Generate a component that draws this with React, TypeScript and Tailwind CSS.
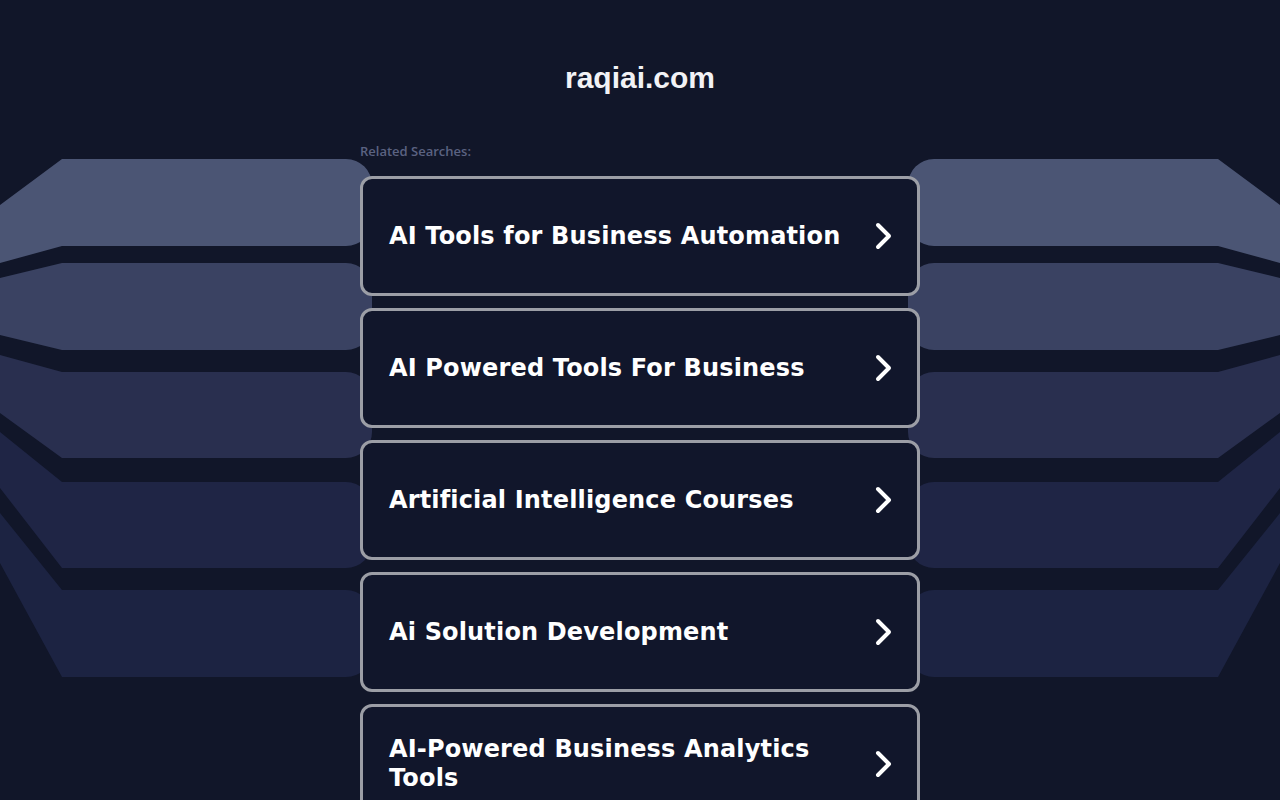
import React from "react";

const bands = [
  { c: "#4b5574", lt: 205, t: 159, b: 246, lb: 263 },
  { c: "#3a4262", lt: 278, t: 263, b: 350, lb: 335 },
  { c: "#292f4f", lt: 355, t: 372, b: 458, lb: 413 },
  { c: "#1f2545", lt: 432, t: 482, b: 568, lb: 488 },
  { c: "#1c2342", lt: 513, t: 590, b: 677, lb: 563 },
];

function bandPath(b: { lt: number; t: number; b: number; lb: number }) {
  const r = 26;
  return `M0 ${b.lt} L62 ${b.t} L${372 - r} ${b.t} A${r} ${r} 0 0 1 372 ${b.t + r} L372 ${b.b - r} A${r} ${r} 0 0 1 ${372 - r} ${b.b} L62 ${b.b} L0 ${b.lb} Z`;
}

function Background() {
  return (
    <svg
      className="absolute left-0 top-0 pointer-events-none"
      width="1280"
      height="800"
      viewBox="0 0 1280 800"
    >
      {bands.map((b, i) => (
        <path key={"l" + i} d={bandPath(b)} fill={b.c} />
      ))}
      <g transform="translate(1280,0) scale(-1,1)">
        {bands.map((b, i) => (
          <path key={"r" + i} d={bandPath(b)} fill={b.c} />
        ))}
      </g>
    </svg>
  );
}

const items = [
  "AI Tools for Business Automation",
  "AI Powered Tools For Business",
  "Artificial Intelligence Courses",
  "Ai Solution Development",
  "AI-Powered Business Analytics Tools",
];

function Chevron() {
  return (
    <svg width="24" height="32" viewBox="0 0 24 32" className="shrink-0">
      <path
        d="M8 5 L19 16 L8 27"
        fill="none"
        stroke="#ffffff"
        strokeWidth="4"
        strokeLinecap="round"
        strokeLinejoin="round"
      />
    </svg>
  );
}

export default function App() {
  return (
    <div className="relative w-full min-h-[800px] h-[800px] overflow-hidden bg-[#111629]">
      <Background />
      <div className="relative flex flex-col items-center pt-[59px]">
        <h1
          className="text-[30px] leading-[38px] font-bold text-[#f2f2f5]"
          style={{ fontFamily: '"Liberation Sans", Arial, sans-serif' }}
        >
          raqiai.com
        </h1>
        <div className="w-[560px] mt-[46px]">
          <div
            className="text-[13px] leading-[17px] text-[#5b6281] font-semibold"
            style={{ fontFamily: '"Open Sans", sans-serif' }}
          >
            Related Searches:
          </div>
          <div className="mt-[16px] flex flex-col gap-[12px]">
            {items.map((t) => (
              <a
                key={t}
                href="#"
                className="flex items-center justify-between h-[120px] rounded-[12px] border-[3px] border-[#9c9ea6] bg-[#11162b] pl-[26px] pr-[23px]"
              >
                <span
                  className="text-[24px] leading-[29px] font-bold text-white pr-6 tracking-[0.16px]"
                  style={{ fontFamily: '"DejaVu Sans", Verdana, sans-serif' }}
                >
                  {t}
                </span>
                <Chevron />
              </a>
            ))}
          </div>
        </div>
      </div>
    </div>
  );
}
